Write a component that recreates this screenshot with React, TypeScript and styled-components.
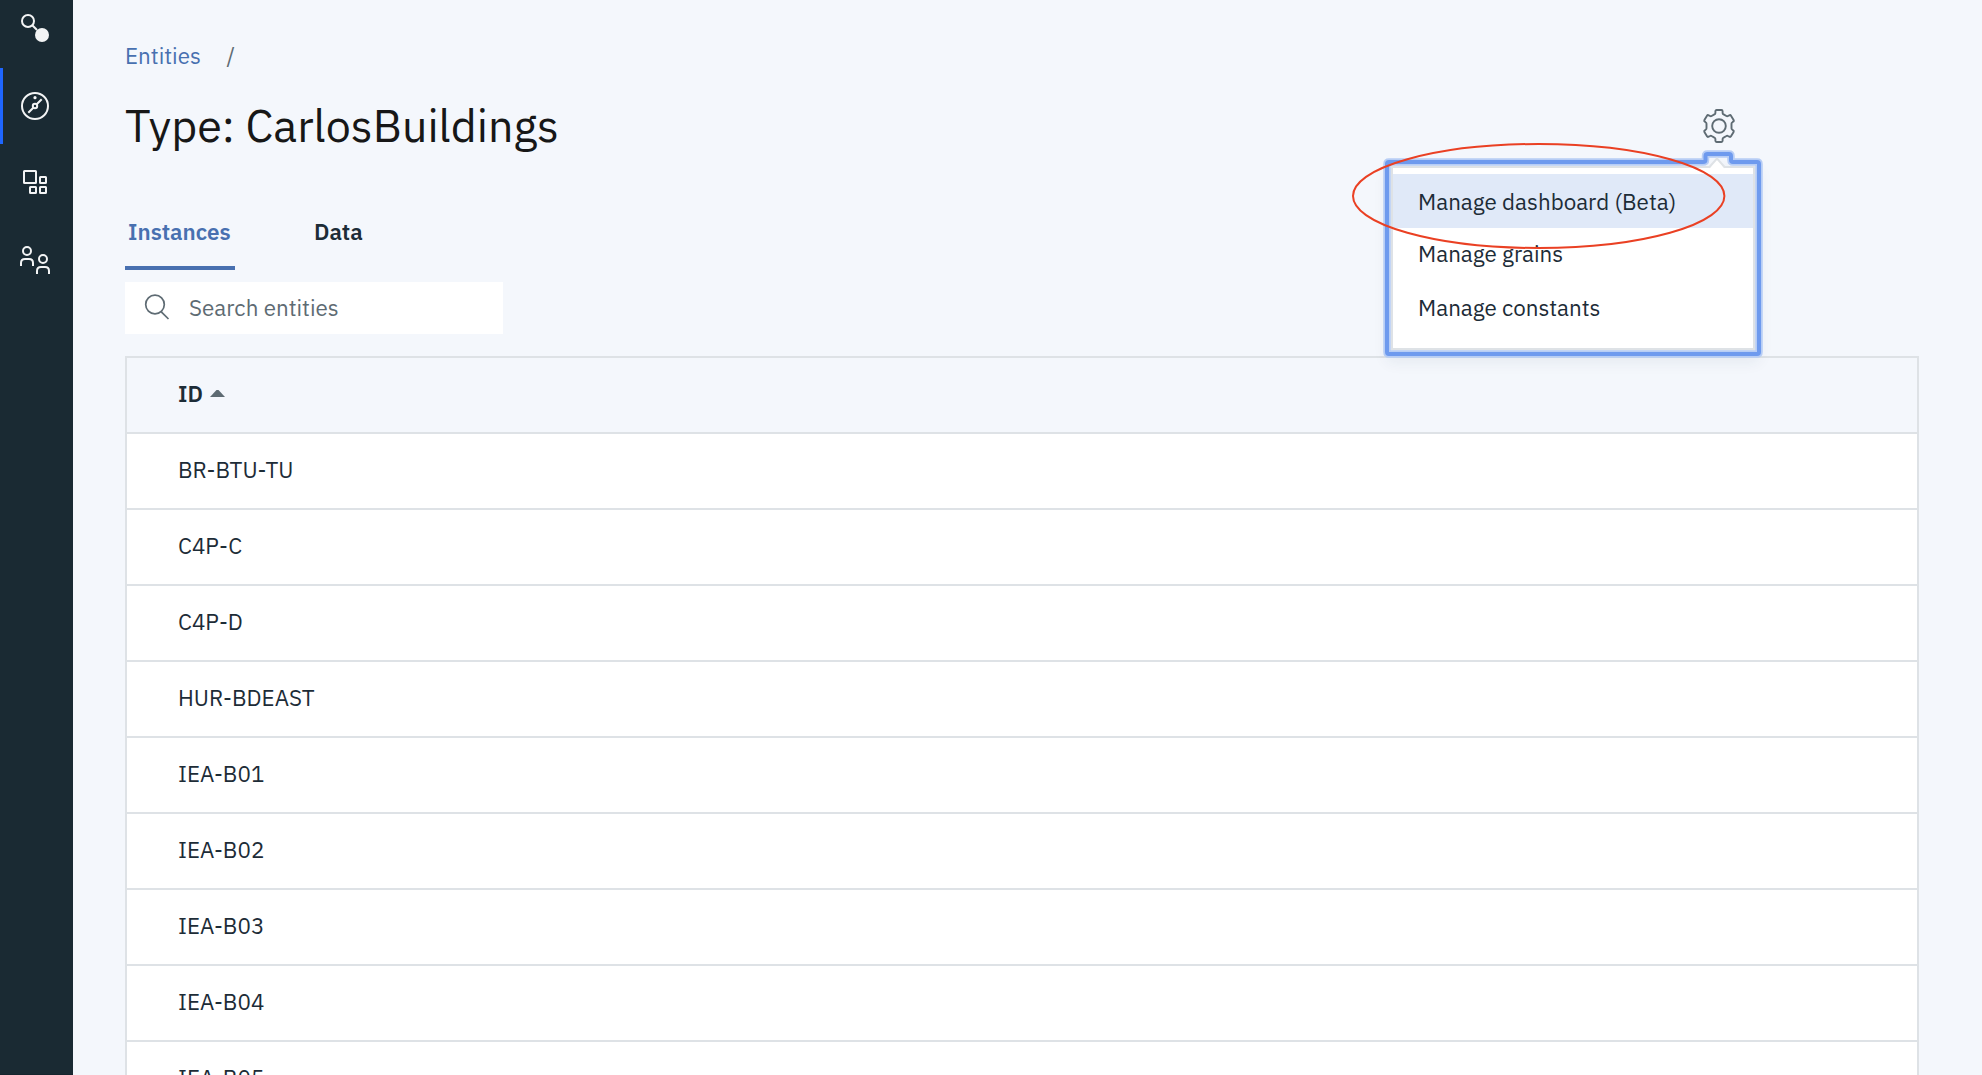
import React from "react";
import styled, { createGlobalStyle } from "styled-components";

const c = {
  page: "#f4f7fc",
  nav: "#1a2a33",
  text: "#1d2c37",
  muted: "#5e6b73",
  link: "#4870b0",
  line: "#dee2e6",
};

const GlobalStyle = createGlobalStyle`
  * { box-sizing: border-box; }
  body {
    margin: 0;
    overflow: hidden;
    background: ${c.page};
    color: ${c.text};
    font-family: "IBM Plex Sans", "Noto Sans", sans-serif;
    font-size: 22.4px;
  }
`;

const Shell = styled.div`
  display: flex;
  height: 1075px;
  overflow: hidden;
`;

const SideNav = styled.nav`
  flex: none;
  width: 73px;
  display: flex;
  flex-direction: column;
  background: ${c.nav};
  border-bottom: 1px solid #16252e;
`;

const NavItem = styled.a<{ $active?: boolean; $height?: number }>`
  flex: none;
  height: ${(p) => p.$height ?? 76}px;
  display: flex;
  align-items: center;
  padding-left: 16px;
  border-left: 3px solid ${(p) => (p.$active ? "#1f66ff" : "transparent")};
  svg { display: block; fill: none; stroke: #f3f4f5; stroke-width: 2; }
`;

const NavGroup = styled.div`
  display: flex;
  flex-direction: column;
  margin-top: 12px;
`;

const Main = styled.main`
  flex: 1;
  min-width: 0;
  padding: 41px 63px 0 52px;
  display: flex;
  flex-direction: column;
`;

const Breadcrumb = styled.div`
  display: flex;
  height: 30px;
  line-height: 30px;
  gap: 25.5px;
  color: ${c.muted};
`;

const Link = styled.a`
  color: ${c.link};
`;

const TitleRow = styled.header`
  display: flex;
  justify-content: space-between;
  align-items: center;
  height: 60px;
  margin-top: 25px;
  padding-right: 183px;
`;

const Title = styled.h1`
  margin: 0;
  padding-bottom: 2px;
  font-size: 44.8px;
  line-height: 58px;
  font-weight: 400;
  color: #171717;
`;

const GearButton = styled.div`
  position: relative;
  width: 34px;
  height: 34px;
`;

const Icon = styled.svg`
  display: block;
  fill: none;
  stroke: ${c.muted};
`;

const Menu = styled.ul`
  position: absolute;
  left: -311px;
  top: 57px;
  width: 364px;
  height: 184px;
  margin: 0;
  padding: 6px 0 0;
  list-style: none;
  background: #fff;
  border: 2px solid ${c.line};
  box-shadow: 0 8px 14px 4px rgba(30, 50, 90, 0.07);
`;

const MenuItem = styled.li<{ $active?: boolean; $height: number }>`
  height: ${(p) => p.$height}px;
  line-height: ${(p) => (p.$height > 52 ? p.$height + 2 : p.$height)}px;
  padding-left: 25px;
  white-space: nowrap;
  background: ${(p) => (p.$active ? "#e0e9f8" : "transparent")};
`;

const FocusRing = styled.svg`
  position: absolute;
  left: -321px;
  top: 33px;
  fill: none;
`;

const Highlight = styled.svg`
  position: absolute;
  left: -352px;
  top: 32px;
  fill: none;
  stroke: #ea4023;
  stroke-width: 2;
`;

const Tabs = styled.div`
  display: flex;
  gap: 76px;
  height: 60px;
  margin-top: 54px;
`;

const Tab = styled.div<{ $active?: boolean }>`
  height: 60px;
  line-height: 44px;
  padding: 0 3px;
  font-weight: 600;
  white-space: nowrap;
  color: ${(p) => (p.$active ? c.link : c.text)};
  border-bottom: 4px solid ${(p) => (p.$active ? c.link : "transparent")};
  width: ${(p) => (p.$active ? "110px" : "auto")};
`;

const Search = styled.div`
  display: flex;
  align-items: center;
  flex: none;
  width: 378px;
  height: 52px;
  margin-top: 12px;
  padding: 0 0 2px 19px;
  gap: 19px;
  background: #fff;
  color: ${c.muted};
`;

const Table = styled.div`
  flex: none;
  margin-top: 22px;
  border: 2px solid ${c.line};
  border-bottom: 0;
`;

const Row = styled.div<{ $head?: boolean }>`
  display: flex;
  align-items: center;
  gap: 7px;
  height: 76px;
  padding: 0 0 3px 51px;
  background: ${(p) => (p.$head ? c.page : "#fff")};
  border-bottom: 2px solid ${c.line};
  font-weight: ${(p) => (p.$head ? 600 : 400)};
`;

const SortArrow = styled.svg`
  display: block;
  fill: ${c.muted};
`;

const rows = [
  "BR-BTU-TU",
  "C4P-C",
  "C4P-D",
  "HUR-BDEAST",
  "IEA-B01",
  "IEA-B02",
  "IEA-B03",
  "IEA-B04",
  "IEA-B05",
];

const ringPath =
  "M8 20H322Q324.5 20 324.5 18V14Q324.5 12 326.5 12H348Q350 12 350 14V18Q350 20 352 20H376Q378 20 378 22V210Q378 212 376 212H8Q6 212 6 210V22Q6 20 8 20Z";

export default function App() {
  return (
    <>
      <GlobalStyle />
      <Shell>
        <SideNav>
          <NavItem $height={56}>
            <svg width="32" height="32" viewBox="0 0 32 32">
              <circle cx="9" cy="9" r="6" />
              <path d="M13.3 13.3L18 18" />
              <circle cx="23" cy="23" r="7" fill="#f3f4f5" stroke="none" />
            </svg>
          </NavItem>
          <NavGroup>
            <NavItem $active>
              <svg width="32" height="32" viewBox="0 0 32 32">
                <circle cx="16" cy="16" r="13" />
                <circle cx="16" cy="16" r="2.2" />
                <path d="M17.7 14.3L22.7 9.3M14.3 17.7L9.3 22.7" />
                <circle cx="16" cy="7.7" r="1.6" fill="#f3f4f5" stroke="none" />
              </svg>
            </NavItem>
            <NavItem>
              <svg width="32" height="32" viewBox="0 0 32 32">
                <rect x="5" y="5" width="12" height="12" rx="0.5" />
                <rect x="21" y="11" width="6" height="6" rx="0.5" />
                <rect x="11" y="21" width="6" height="6" rx="0.5" />
                <rect x="21" y="21" width="6" height="6" rx="0.5" />
              </svg>
            </NavItem>
            <NavItem>
              <svg width="32" height="32" viewBox="0 0 32 32">
                <circle cx="8" cy="9" r="4" />
                <path d="M2 24V21Q2 17 6 17H10Q14 17 14 21V24" />
                <circle cx="24" cy="17" r="4" />
                <path d="M18 32V29Q18 25 22 25H26Q30 25 30 29V32" />
              </svg>
            </NavItem>
          </NavGroup>
        </SideNav>
        <Main>
          <Breadcrumb>
            <Link>Entities</Link>
            <span>/</span>
          </Breadcrumb>
          <TitleRow>
            <Title>Type: CarlosBuildings</Title>
            <GearButton>
              <Icon width="34" height="34" viewBox="0 0 34 34" strokeWidth="1.9" strokeLinejoin="round">
                <circle cx="17" cy="17" r="6.8" />
                <path d="M14.6 1H19.4Q20.6 1 20.6 2.2V4Q20.6 5 21.6 5.4L24.4 7Q25.2 7.5 26 7L27.3 6.3Q28.4 5.7 29 6.7L31.6 11Q32.2 12 31.2 12.6L30.4 13.2Q29.5 13.8 29.5 14.8V19.2Q29.5 20.2 30.4 20.8L31.2 21.4Q32.2 22 31.6 23L29 27.3Q28.4 28.3 27.3 27.7L26 27Q25.2 26.5 24.4 27L21.6 28.6Q20.6 29 20.6 30V31.8Q20.6 33 19.4 33H14.6Q13.4 33 13.4 31.8V30Q13.4 29 12.4 28.6L9.6 27Q8.8 26.5 8 27L6.7 27.7Q5.6 28.3 5 27.3L2.4 23Q1.8 22 2.8 21.4L3.6 20.8Q4.5 20.2 4.5 19.2V14.8Q4.5 13.8 3.6 13.2L2.8 12.6Q1.8 12 2.4 11L5 6.7Q5.6 5.7 6.7 6.3L8 7Q8.8 7.5 9.6 7L12.4 5.4Q13.4 5 13.4 4V2.2Q13.4 1 14.6 1Z" />
              </Icon>
              <Menu>
                <MenuItem $active $height={54}>Manage dashboard (Beta)</MenuItem>
                <MenuItem $height={52}>Manage grains</MenuItem>
                <MenuItem $height={54}>Manage constants</MenuItem>
              </Menu>
              <FocusRing width="384" height="220" viewBox="0 0 384 220">
                <path d={ringPath} stroke="#b7cdf5" strokeWidth="7.5" />
                <path d={ringPath} stroke="#6e9aee" strokeWidth="4" />
                <path d="M328 27L336 17L344 27Z" fill="#fff" />
                <path d="M328 25.5L336 16.5L344 25.5" stroke={c.line} strokeWidth="2" />
              </FocusRing>
              <Highlight width="378" height="110" viewBox="0 0 378 110">
                <ellipse cx="188.7" cy="55" rx="185.7" ry="52" />
              </Highlight>
            </GearButton>
          </TitleRow>
          <Tabs>
            <Tab $active>Instances</Tab>
            <Tab>Data</Tab>
          </Tabs>
          <Search>
            <Icon width="26" height="26" viewBox="0 0 26 26" strokeWidth="1.7">
              <circle cx="11" cy="10.5" r="9.3" />
              <path d="M17.3 17.8L24.5 25" />
            </Icon>
            Search entities
          </Search>
          <Table>
            <Row $head>
              ID
              <SortArrow width="15" height="8" viewBox="0 0 15 8">
                <path d="M0 7L6.5 0H8.5L15 7Z" />
              </SortArrow>
            </Row>
            {rows.map((id) => (
              <Row key={id}>{id}</Row>
            ))}
          </Table>
        </Main>
      </Shell>
    </>
  );
}
